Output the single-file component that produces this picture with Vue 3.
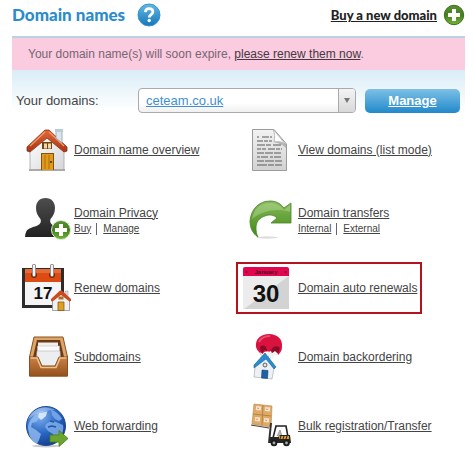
<template>
  <main class="domains">
    <!-- Page header -->
    <header class="header">
      <h1>Domain names</h1>
      <button type="button" class="help" aria-label="Help">
        <svg width="24" height="24" viewBox="0 0 24 24">
          <defs>
            <linearGradient id="helpBlue" x1="0" y1="0" x2="0" y2="1">
              <stop offset="0" stop-color="#63b9e6" />
              <stop offset="1" stop-color="#1577b8" />
            </linearGradient>
          </defs>
          <circle cx="12" cy="12" r="11" fill="url(#helpBlue)" stroke="#3b93c8" />
          <path d="M8.3 9.2C8.5 6.8 10 5.6 12.1 5.6c2.2 0 3.8 1.3 3.8 3.2 0 2.9-3.6 2.8-3.6 5.6" fill="none" stroke="#fff" stroke-width="2.7" />
          <circle cx="12.2" cy="17.5" r="1.7" fill="#fff" />
        </svg>
      </button>
      <a href="#" class="buy">
        <span>Buy a new domain</span>
        <svg width="22" height="22" viewBox="0 0 22 22">
          <defs>
            <linearGradient id="plusGreen" x1="0" y1="0" x2="0" y2="1">
              <stop offset="0" stop-color="#5b8f35" />
              <stop offset="0.5" stop-color="#43801b" />
              <stop offset="1" stop-color="#76b53c" />
            </linearGradient>
          </defs>
          <circle cx="11" cy="11" r="9.7" fill="url(#plusGreen)" stroke="#3f6b24" />
          <path d="M11 5v12M5 11h12" stroke="#fff" stroke-width="4" />
        </svg>
      </a>
    </header>

    <!-- Expiry notice -->
    <p class="notice">Your domain name(s) will soon expire, <a href="#">please renew them now</a>.</p>

    <!-- Domain picker -->
    <form class="picker" @submit.prevent>
      <label for="domain">Your domains:</label>
      <div class="select-wrap">
        <select id="domain" v-model="domain">
          <option v-for="name in domains" :key="name" :value="name">{{ name }}</option>
        </select>
        <span class="arrow"></span>
      </div>
      <button type="submit" class="manage">Manage</button>
    </form>

    <!-- Tools -->
    <ul class="tools">
      <li v-for="tool in tools" :key="tool.icon">
        <div class="tool" :class="{ highlighted: tool.highlighted }">
          <svg width="52" height="48" viewBox="0 0 52 48" aria-hidden="true">
            <g v-if="tool.icon === 'house'">
              <defs>
                <linearGradient id="roofRed" x1="0" y1="0" x2="0" y2="1">
                  <stop offset="0" stop-color="#e2683a" />
                  <stop offset="1" stop-color="#a93414" />
                </linearGradient>
                <linearGradient id="wallGrey" x1="0" y1="0" x2="1" y2="1">
                  <stop offset="0" stop-color="#fff" />
                  <stop offset="1" stop-color="#d6d6da" />
                </linearGradient>
              </defs>
              <path d="M11 22L28 8l17 14v22H11z" fill="url(#wallGrey)" stroke="#a3a3a8" stroke-width=".8" />
              <path d="M10 43h36v2H10z" fill="#aaa" />
              <path d="M26 4h4l18 17v4l-3 1L28 12 11 26l-3-1v-4z" fill="url(#roofRed)" stroke="#8a3014" stroke-width=".8" />
              <path d="M26 6L11 20M30 6l15 14" fill="none" stroke="#f39b68" stroke-width="1.200" />
              <path d="M37 5h6v12l-6-5z" fill="#dbe5ee" stroke="#93a0aa" stroke-width=".8" />
              <path d="M36 3h8v3h-8z" fill="#b8cbd8" />
              <path d="M23 16h10v7H23z" fill="#71450e" />
              <path d="M25 17.500h3v5h-3zM29 17.500h3v5h-3z" fill="#f0d9a8" />
              <path d="M22 27h13v17H22z" fill="#83500f" />
              <path d="M23 28h11v16H23z" fill="#e09b1c" />
              <path d="M26 29v14M30 29v14" stroke="#af6d0d" />
              <circle cx="32" cy="36" r="1" fill="#4c2c06" />
            </g>

            <g v-else-if="tool.icon === 'document'">
              <defs>
                <linearGradient id="paper" x1="0" y1="0" x2="0" y2="1">
                  <stop offset="0" stop-color="#f2f2f2" />
                  <stop offset="1" stop-color="#d2d2d2" />
                </linearGradient>
              </defs>
              <path d="M9.500 3.500H31L43.500 18v26.500h-34z" fill="url(#paper)" stroke="#9a9a9a" />
              <path d="M30 3c2 5 2 8 1 13 5-1 9 0 12 3z" fill="#fdfdfd" stroke="#a9a9a9" stroke-width=".8" />
              <path d="M31 16c5-1 9 0 12 3v3c-4-4-8-5-12-6z" fill="#b5b5b5" />
              <g stroke="#6a6a6a" stroke-width="1.500" opacity=".75">
                <path d="M14 11h15" stroke-dasharray="2 3 7 1" />
                <path d="M14 15h15" stroke-dasharray="6 1 4 1" />
                <path d="M14 19h25" stroke-dasharray="8 1 5 2" />
                <path d="M14 23h25" stroke-dasharray="4 1 4 2 7 1" />
                <path d="M14 27h25" stroke-dasharray="7 1 8 1" />
                <path d="M14 31h25" stroke-dasharray="3 1 7 2" />
                <path d="M14 35h25" stroke-dasharray="7 1 9 1" />
                <path d="M14 39h25" stroke-dasharray="10 1 6 1" />
              </g>
            </g>

            <g v-else-if="tool.icon === 'privacy'">
              <defs>
                <linearGradient id="person" x1="0" y1="0" x2="0" y2="1">
                  <stop offset="0" stop-color="#4e4e4e" />
                  <stop offset="1" stop-color="#222" />
                </linearGradient>
              </defs>
              <path d="M26.500 3c-6 0-9.500 4-9.500 10 0 5 2 8 4.500 11 1 3 0 5-3 6.500-5 2-9 2.500-11 5.500-1 2-1.500 4-1.500 6h41c0-2-.500-4-1.500-6-2-3-6-3.500-11-5.500-3-1.500-4-3.500-3-6.500C34 21 36 18 36 13c0-6-3.500-10-9.500-10z" fill="url(#person)" />
              <circle cx="42" cy="35" r="9.500" fill="url(#plusGreen)" stroke="#dfe8d8" />
              <path d="M42 29v12M36 35h12" stroke="#fff" stroke-width="4" />
            </g>

            <g v-else-if="tool.icon === 'transfer'">
              <defs>
                <linearGradient id="arrowGreen" x1="0" y1="0" x2="0" y2="1">
                  <stop offset="0" stop-color="#86b95a" />
                  <stop offset="1" stop-color="#3f8a15" />
                </linearGradient>
              </defs>
              <ellipse cx="24" cy="42.500" rx="11" ry="1.200" fill="#ddd" />
              <path d="M15 42C9 38 7 32 7 26 8 14 16 6 27 6c6 0 10 2 14 7l7-5v20H28l6-5c-3-3-7-4-12-2-6 2-9 6-9 12 0 3 .500 6 2 9z" fill="url(#arrowGreen)" stroke="#4c8429" stroke-width=".8" />
              <path d="M9 24C11 13 18 8 27 8c6 0 10 2 14 7l6-5v7c-12-4-27-2-38 7z" fill="#b9dc98" opacity=".45" />
            </g>

            <g v-else-if="tool.icon === 'renew'">
              <path d="M3 4h42v40H3z" fill="#2c2c2c" />
              <path d="M6 5h36v13H6z" fill="#dc4b12" />
              <path d="M6 5h36v4H6z" fill="#ef8150" opacity=".6" />
              <path d="M6 18h36v23H6z" fill="#f5f5f5" />
              <circle cx="15" cy="11" r="3" fill="#7a2507" />
              <circle cx="33" cy="11" r="3" fill="#7a2507" />
              <path d="M15 2v9M33 2v9" stroke="#777" stroke-width="4" stroke-linecap="round" />
              <path d="M15 2v9M33 2v9" stroke="#f2f2f2" stroke-width="2.400" stroke-linecap="round" />
              <text x="24" y="35" text-anchor="middle" class="day day-small">17</text>
              <path d="M46 27h3v7h-3z" fill="#d8dde1" stroke="#999" stroke-width=".5" />
              <path d="M33.500 36l8.500-7 8.500 7v10.500h-17z" fill="#f0eff2" stroke="#8d8d92" stroke-width=".8" />
              <path d="M41 26.500h2L52 35v2l-1.500.500L42 31l-8.500 6.500L32 37v-2z" fill="#c94b20" />
              <path d="M39.500 32.500h5v3h-5z" fill="#a8702a" />
              <path d="M39 38h6v8.500h-6z" fill="#dca122" stroke="#7d4e10" stroke-width=".7" />
            </g>

            <g v-else-if="tool.icon === 'auto'">
              <path d="M0 5a2 2 0 012-2h42a2 2 0 012 2v7H0z" fill="#e2064f" />
              <path d="M0 12h46v33H0z" fill="#ececec" />
              <path d="M46 12v33H1z" fill="#d3d3d3" />
              <circle cx="3.500" cy="8" r="1" fill="#6d0530" />
              <circle cx="42.500" cy="8" r="1" fill="#6d0530" />
              <text x="23" y="10" text-anchor="middle" class="month">January</text>
              <text x="23" y="38" text-anchor="middle" class="day">30</text>
            </g>

            <g v-else-if="tool.icon === 'tray'">
              <defs>
                <linearGradient id="wood" x1="0" y1="0" x2="0" y2="1">
                  <stop offset="0" stop-color="#c98145" />
                  <stop offset="1" stop-color="#96511d" />
                </linearGradient>
              </defs>
              <path d="M15 4h29l4.500 20v19h-38V24z" fill="#dba668" stroke="#8a501f" />
              <path d="M18 7h23l4 17H14z" fill="#6c3914" />
              <path d="M19 9.500h20v5H19z" fill="#efefef" />
              <path d="M18.500 13h22v6h-22z" fill="#fafafa" stroke="#bbb" stroke-width=".5" />
              <path d="M18 18h23l1 15H17z" fill="#eceef0" stroke="#b5b5b5" stroke-width=".6" />
              <path d="M10.500 24H19l4 9h13l4-9h8.500v19h-38z" fill="url(#wood)" stroke="#8a501f" />
              <path d="M11.500 25H18l4 9.500h15l4-9.500h6.500" fill="none" stroke="#efc18c" stroke-width="1.500" />
            </g>

            <g v-else-if="tool.icon === 'globe'">
              <defs>
                <radialGradient id="ocean" cx=".35" cy=".25" r=".8">
                  <stop offset="0" stop-color="#7fb0ee" />
                  <stop offset=".55" stop-color="#2a67c4" />
                  <stop offset="1" stop-color="#123c88" />
                </radialGradient>
              </defs>
              <ellipse cx="27" cy="44" rx="14" ry="1.500" fill="#ccc" />
              <circle cx="27" cy="24" r="19.500" fill="url(#ocean)" stroke="#1d4a94" />
              <path d="M17 12c4-3 8-4 12-3l-3 4-2 4-4-1-3 4-4 1-1 4 5 3 5 4-2 6-2 4c-4-2-7-6-8-10l-1-6c0-5 3-10 8-14z" fill="#93bdf0" opacity=".8" />
              <path d="M20 11l8-1-1 4-5 4-3-3z" fill="#d6e6fa" />
              <path d="M32 8c5 1 9 5 11 9l-3 2-4-2-3-4zM27 22l5-3 5 1 7 3c1 6-1 10-4 14l-4 2-2-7-5-3-3-4z" fill="#7dacea" opacity=".85" />
              <path d="M29 25l4-1 4 1M31 19l4 1" stroke="#24579f" stroke-width="1.500" />
              <path d="M9 17C13 7 25 2 36 8 26 8 17 11 9 17z" fill="#fff" opacity=".3" />
              <path d="M31 33h9v-4.500l9 8-9 8V40h-9z" fill="#6aa52d" stroke="#4b7d1b" stroke-width=".8" />
            </g>

            <g v-else-if="tool.icon === 'balloon'">
              <path d="M16 19l7 9 13-9M22 20l1 7 6-8" fill="none" stroke="#aaa" stroke-width=".8" />
              <path d="M13 14C12 6 18 1 26 1s14 5 13 13c0 4-2 6-4 8-1-3-3-3-4-1-1-3-4-4-6-1-1-2-4-2-5 1-3-1-6-3-7-7z" fill="#d9123f" />
              <path d="M17 14c3-3 7-1 7 4-3-2-4 0-4 2-2-1-3-3-3-6zM28 18c1-5 6-6 9-3l-2 6c-1-3-4-3-5 0z" fill="#8a0a2a" />
              <path d="M16 9c2-4 6-6 11-6" fill="none" stroke="#ea4f6c" stroke-width="2" />
              <path d="M17 19l3 3 5-4 3 3 4-3 3 3-6 5-5-5-4 3z" fill="#f3f3f3" />
              <path d="M12 34l11-10 8 11-2 11-18-2z" fill="#eef1f4" stroke="#9aa4ae" stroke-width=".6" />
              <path d="M22 20L11 32v3l12-9 8 10 2-2z" fill="#2a8bd0" stroke="#15639c" stroke-width=".6" />
              <circle cx="22" cy="32" r="2" fill="#e4e4e4" stroke="#59636c" />
              <path d="M19 37l6 .5-.5 8-6-.5z" fill="#1b62a8" stroke="#123f70" stroke-width=".6" />
            </g>

            <g v-else-if="tool.icon === 'forklift'">
              <path d="M11 2l18 2-1 21-19-3z" fill="#dfaa66" stroke="#b98548" stroke-width=".6" />
              <path d="M10 12l18 2M20 3l-1 20" stroke="#a9783c" stroke-width=".8" />
              <path d="M13 6l5 .5M22 7l5 .5M12 17l5 .5M21 18l5 .5" stroke="#fae3cf" stroke-width="4" />
              <path d="M14 6l2 .5M23 7l2 .5M13 17l2 .5M22 18l2 .5" stroke="#d98e78" />
              <path d="M8 23l18 3" stroke="#444" stroke-width="1.200" />
              <path d="M28 21l-2 20" stroke="#333" stroke-width="2" />
              <path d="M30 36l3-12h10l2 11" fill="none" stroke="#222" stroke-width="1.600" />
              <path d="M34 34l3-6 2 6" fill="#bcbcbc" stroke="#777" stroke-width=".6" />
              <path d="M27 35h8l2-2h10l1 8H26z" fill="#252525" />
              <path d="M36 34h10v3H36z" fill="#e19b1e" />
              <path d="M38 34l-1 3M41 34l-1 3M44 34l-1 3" stroke="#252525" />
              <circle cx="31" cy="41" r="3.300" fill="#1c1c1c" />
              <circle cx="43.500" cy="41" r="3.300" fill="#1c1c1c" />
              <circle cx="31" cy="41" r="1.400" fill="#aaa" />
              <circle cx="43.500" cy="41" r="1.400" fill="#aaa" />
            </g>
          </svg>

          <div class="links">
            <a href="#">{{ tool.title }}</a>
            <div v-if="tool.actions" class="actions">
              <a v-for="action in tool.actions" :key="action" href="#">{{ action }}</a>
            </div>
          </div>
        </div>
      </li>
    </ul>
  </main>
</template>

<script setup>
import { ref } from 'vue'

// Domains on the account
const domains = ['ceteam.co.uk']
const domain = ref(domains[0])

// Tool links, two per row
const tools = [
  { icon: 'house', title: 'Domain name overview' },
  { icon: 'document', title: 'View domains (list mode)' },
  { icon: 'privacy', title: 'Domain Privacy', actions: ['Buy', 'Manage'] },
  { icon: 'transfer', title: 'Domain transfers', actions: ['Internal', 'External'] },
  { icon: 'renew', title: 'Renew domains' },
  { icon: 'auto', title: 'Domain auto renewals', highlighted: true },
  { icon: 'tray', title: 'Subdomains' },
  { icon: 'balloon', title: 'Domain backordering' },
  { icon: 'globe', title: 'Web forwarding' },
  { icon: 'forklift', title: 'Bulk registration/Transfer' },
]
</script>

<style>
body {
  background: #fff;
}
</style>

<style scoped>
.domains {
  padding: 0 9px 0 12px;
  font-family: "Liberation Sans", Arial, sans-serif;
  font-size: 13px;
  line-height: 16px;
  color: #444;
}

.domains svg {
  display: block;
  flex: none;
}

a {
  color: #444;
}

.header {
  display: flex;
  align-items: center;
  height: 30px;
  padding-bottom: 6px;
}

h1 {
  margin: 0 12px 0 0;
  font-family: Lato, sans-serif;
  font-size: 17px;
  font-weight: 900;
  color: #2b8ccb;
}

.help {
  padding: 0;
  border: none;
  background: none;
  cursor: pointer;
}

.buy {
  display: flex;
  align-items: center;
  gap: 6px;
  margin-left: auto;
  font-family: Lato, sans-serif;
  font-weight: 900;
  color: #222;
}

.notice {
  margin: 0;
  padding: 8px 16px;
  border-top: 2px solid #b9d3e3;
  background: #fbcbe0;
  font-size: 12px;
  color: #776671;
}

.notice a {
  color: #443a40;
}

.picker {
  display: flex;
  align-items: center;
  padding: 18px 5px 2px 4px;
  background: linear-gradient(#d9edf7, #fff 90%);
}

.picker label {
  width: 122px;
}

.select-wrap {
  position: relative;
  flex: 1;
}

select {
  display: block;
  appearance: none;
  width: 100%;
  height: 25px;
  padding: 0 24px 0 7px;
  border: 1px solid #aaa;
  border-radius: 4px;
  background: linear-gradient(#fff, #fff 60%, #f0f0f0);
  font-family: inherit;
  font-size: 13px;
  text-decoration: underline;
  color: #3f8fd0;
}

.arrow {
  position: absolute;
  top: 1px;
  right: 1px;
  bottom: 1px;
  display: flex;
  align-items: center;
  justify-content: center;
  width: 16px;
  border-left: 1px solid #aaa;
  border-radius: 0 3px 3px 0;
  background: linear-gradient(#f4f4f4, #d8d8d8);
  pointer-events: none;
}

.arrow::after {
  content: "";
  border: 3px solid transparent;
  border-top: 5px solid #777;
  border-bottom: none;
}

.manage {
  width: 95px;
  height: 24px;
  margin-left: 9px;
  padding: 0;
  border: none;
  border-radius: 5px;
  background: linear-gradient(#7dc0e6, #2189ca);
  font-family: inherit;
  font-size: 13px;
  font-weight: bold;
  text-decoration: underline;
  color: #fff;
  cursor: pointer;
}

.tools {
  display: grid;
  grid-template-columns: 1fr 1fr;
  grid-auto-rows: 69px;
  margin: 0;
  padding: 0 5px 0 0;
  list-style: none;
}

.tools li {
  display: flex;
  align-items: center;
}

.tool {
  display: flex;
  align-items: center;
  gap: 3px;
  padding: 0 5px;
  border: 2px solid transparent;
  font-size: 12px;
  white-space: nowrap;
}

.tool.highlighted {
  padding-right: 3px;
  border-color: #b3141b;
}

.actions {
  display: flex;
  margin-bottom: -4px;
  font-size: 10px;
}

.actions a + a {
  position: relative;
  margin-left: 12px;
}

.actions a + a::before {
  content: "";
  position: absolute;
  top: 2px;
  bottom: 2px;
  left: -7px;
  border-left: 1px solid #666;
}

.day {
  font-size: 24px;
  font-weight: bold;
  fill: #111;
}

.day-small {
  font-size: 17px;
}

.month {
  font-size: 6px;
  font-weight: bold;
  fill: #4d0322;
}
</style>
